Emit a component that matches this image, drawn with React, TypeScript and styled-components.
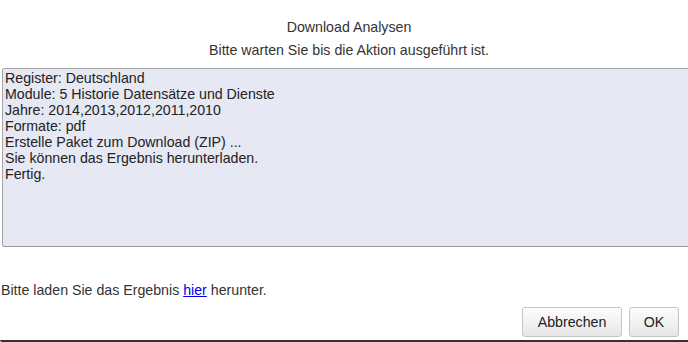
import React from "react";
import styled, { createGlobalStyle } from "styled-components";

const GlobalStyle = createGlobalStyle`
    html, body {
        margin: 0;
        padding: 0;
        background: #fff;
        overflow: hidden;
    }
`;

const logLines = [
    "Register: Deutschland",
    "Module: 5 Historie Datensätze und Dienste",
    "Jahre: 2014,2013,2012,2011,2010",
    "Formate: pdf",
    "Erstelle Paket zum Download (ZIP) ...",
    "Sie können das Ergebnis herunterladen.",
    "Fertig.",
];

const App = () => {
    return (
        <>
            <GlobalStyle />
            <Dialog>
                <Content>
                    <Title>Download Analysen</Title>
                    <Hint>Bitte warten Sie bis die Aktion ausgeführt ist.</Hint>
                    <LogBox>
                        {logLines.map((line) => (
                            <div key={line}>{line}</div>
                        ))}
                    </LogBox>
                    <Result>
                        Bitte laden Sie das Ergebnis <Link href="#">hier</Link> herunter.
                    </Result>
                </Content>
                <ButtonBar>
                    <Button $width={100}>Abbrechen</Button>
                    <Button $width={50}>OK</Button>
                </ButtonBar>
            </Dialog>
        </>
    );
};

export default App;

const Dialog = styled.div`
    width: 698px;
    height: 342px;
    box-sizing: border-box;
    border-bottom: 2px solid #333;
    border-bottom-left-radius: 2px;
    font-family: "Liberation Sans", Arial, sans-serif;
    font-size: 14.2px;
    color: #333;
    display: flex;
    flex-direction: column;
`;

const Content = styled.div`
    flex: 1;
    padding: 19px 0 0 0;
`;

const Title = styled.div`
    text-align: center;
    line-height: 16px;
`;

const Hint = styled.div`
    text-align: center;
    line-height: 16px;
    margin-top: 7px;
`;

const LogBox = styled.div`
    margin: 10px 0 0 2px;
    height: 179px;
    box-sizing: border-box;
    background: #e6e8f4;
    border: 1px solid #a6a6a6;
    border-bottom-color: #999;
    border-radius: 2px 0 0 2px;
    padding: 1px 2px;
    line-height: 16px;
    color: #222;
`;

const Result = styled.div`
    margin-top: 35px;
    padding-left: 1px;
    line-height: 16px;
`;

const Link = styled.a`
    color: #0000ee;
    text-decoration: underline;
`;

const ButtonBar = styled.div`
    display: flex;
    justify-content: flex-end;
    gap: 7px;
    padding: 0 19px 3px 0;
`;

const Button = styled.button<{ $width: number }>`
    width: ${({ $width }) => $width}px;
    height: 30px;
    padding: 0;
    font-family: "Liberation Sans", Arial, sans-serif;
    font-size: 14.2px;
    color: #222;
    background: linear-gradient(#fdfdfd, #e6e6e6);
    border: 1px solid #c4c4c4;
    border-radius: 3px;
`;
